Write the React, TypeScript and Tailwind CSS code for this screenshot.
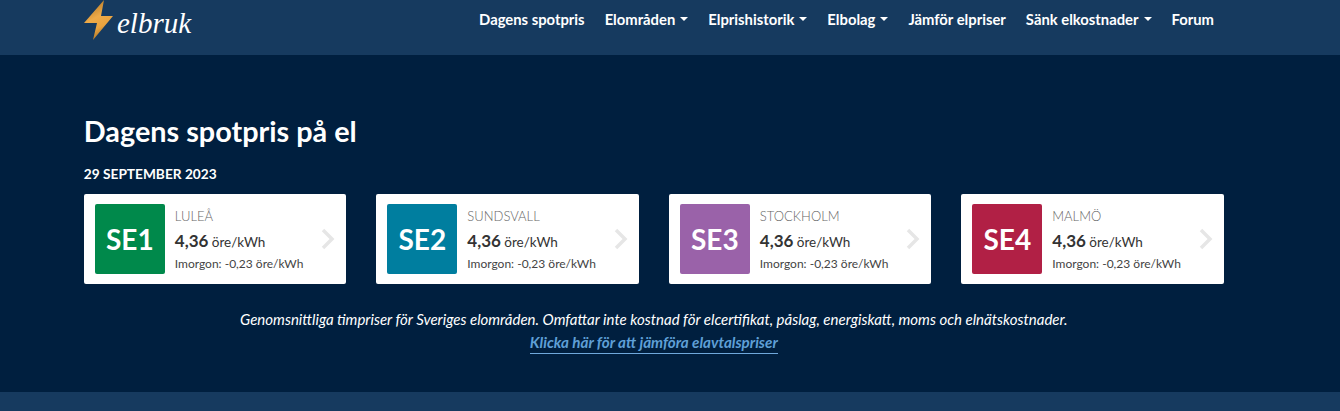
const areas = [
  { code: 'SE1', city: 'LULEÅ', color: 'bg-[#00894b]' },
  { code: 'SE2', city: 'SUNDSVALL', color: 'bg-[#007e9f]' },
  { code: 'SE3', city: 'STOCKHOLM', color: 'bg-[#9a62a9]' },
  { code: 'SE4', city: 'MALMÖ', color: 'bg-[#b12045]' },
];

const navItems = [
  { label: 'Dagens spotpris' },
  { label: 'Elområden', caret: true },
  { label: 'Elprishistorik', caret: true },
  { label: 'Elbolag', caret: true },
  { label: 'Jämför elpriser' },
  { label: 'Sänk elkostnader', caret: true },
  { label: 'Forum' },
];

function Logo() {
  return (
    <div className="flex items-start">
      <svg width="30" height="41" viewBox="0 0 30 41">
        <defs>
          <linearGradient id="bolt" x1="0.2" y1="0" x2="0.6" y2="1">
            <stop offset="0" stopColor="#a86f22" />
            <stop offset="0.45" stopColor="#eeaa48" />
            <stop offset="0.7" stopColor="#e9a33f" />
            <stop offset="1" stopColor="#9c6a24" />
          </linearGradient>
        </defs>
        <path d="M20 0 L0 23 L13 23 L9 40 L29 16 L17 16 Z" fill="url(#bolt)" />
      </svg>
      <span className="ml-[3px] mt-[9px] font-['Liberation_Serif',serif] text-[29px] leading-none text-white italic">
        elbruk
      </span>
    </div>
  );
}

function AreaCard({ code, city, color }: { code: string; city: string; color: string }) {
  return (
    <div className="flex h-[90px] items-center rounded-[2px] bg-white pl-[11px]">
      <div className={`flex h-[70px] w-[70px] items-center justify-center rounded-[2px] text-[28px] font-bold text-white ${color}`}>
        {code}
      </div>
      <div className="ml-[10px] flex-1 pt-[2px]">
        <div className="text-[13px] leading-[20px] font-light text-[#666]">{city}</div>
        <div className="mt-[3px] text-[13.5px] leading-[24px] text-[#333]">
          <span className="text-[17px] font-bold">4,36</span> öre/kWh
        </div>
        <div className="text-[12px] leading-[20px] text-[#444]">Imorgon: -0,23 öre/kWh</div>
      </div>
      <svg width="14" height="22" viewBox="0 0 14 22" className="mr-[11px]" fill="none" stroke="#e6e6e6" strokeWidth="3.5">
        <path d="M2 2 L11 11 L2 20" />
      </svg>
    </div>
  );
}

export default function App() {
  return (
    <div className="h-[411px] overflow-hidden bg-[#163a5f] font-['Lato',sans-serif]">
      {/* Header */}
      <header className="ml-[84px] flex h-[55px] w-[1140px] items-start justify-between">
        <Logo />
        <nav className="mr-[10px] flex items-center gap-[20px] pt-[9px] text-[14.8px] leading-[20px] font-bold text-white">
          {navItems.map((item) => (
            <span key={item.label} className="flex items-center">
              {item.label}
              {item.caret && (
                <span className="ml-[5px] h-0 w-0 border-x-[4px] border-t-[4px] border-x-transparent border-t-white" />
              )}
            </span>
          ))}
        </nav>
      </header>

      {/* Spot prices */}
      <main className="h-[337px] bg-[#001f3f]">
        <div className="ml-[83.8px] w-[1140px] pt-[57px]">
          <h1 className="text-[28.8px] leading-[38px] font-bold text-white">Dagens spotpris på el</h1>
          <div className="mt-[14px] text-[13.7px] leading-[20px] font-bold text-white uppercase">29 september 2023</div>
          <div className="mt-[10px] grid grid-cols-4 gap-[30px]">
            {areas.map((area) => (
              <AreaCard key={area.code} {...area} />
            ))}
          </div>
          <div className="mt-[23px] text-center text-[15px] leading-[24px] text-white italic">
            <div>Genomsnittliga timpriser för Sveriges elområden. Omfattar inte kostnad för elcertifikat, påslag, energiskatt, moms och elnätskostnader.</div>
            <div className="leading-[22px]">
              <a className="border-b border-[#6fa8dc] pb-[2px] text-[15.2px] font-bold text-[#5f9fd6]">Klicka här för att jämföra elavtalspriser</a>
            </div>
          </div>
        </div>
      </main>
    </div>
  );
}
